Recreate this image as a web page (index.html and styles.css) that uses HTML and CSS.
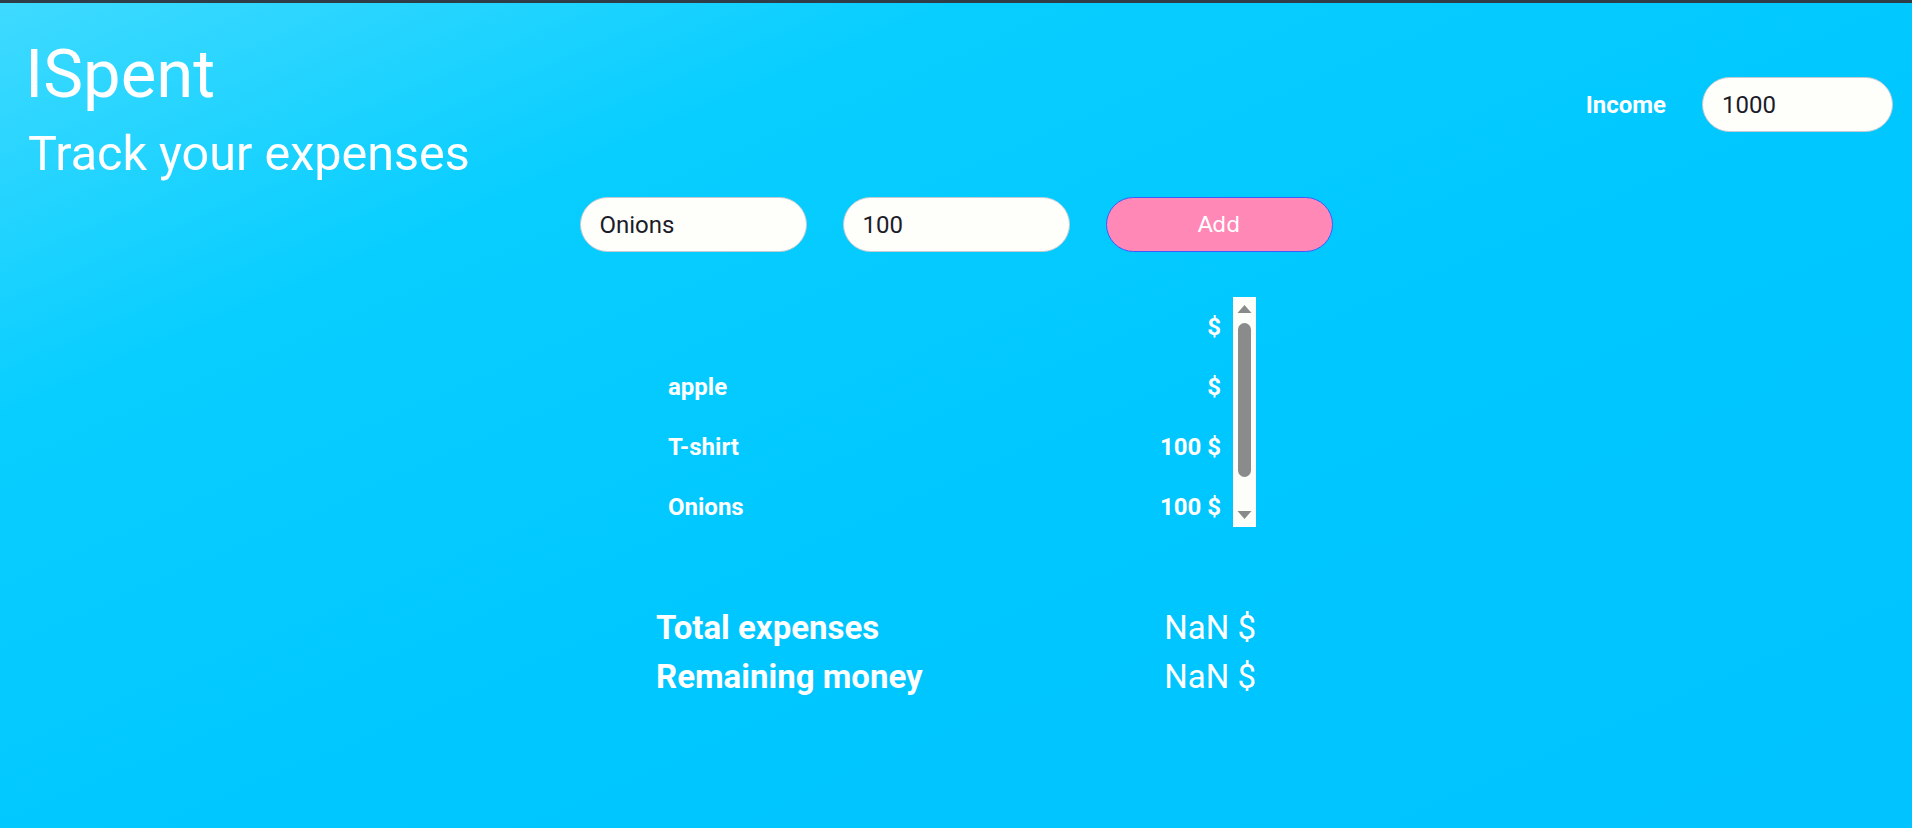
FILE: index.html
```html
<!DOCTYPE html>
<html lang="en">
<head>
<meta charset="utf-8">
<title>ISpent</title>
<link rel="stylesheet" href="styles.css">
</head>
<body>
<header class="top">
  <div class="titles">
    <h1 class="brand">ISpent</h1>
    <h2 class="tagline">Track your expenses</h2>
  </div>
  <div class="income">
    <label class="income-label" for="income">Income</label>
    <input id="income" class="field" type="text" value="1000">
  </div>
</header>
<main class="content">
  <form class="add-form">
    <input class="field" type="text" value="Onions">
    <input class="field" type="text" value="100">
    <button type="button" class="add-btn">Add</button>
  </form>
  <div class="list-box">
    <ul class="list">
      <li class="row"><span class="name"></span><span class="amount"> $</span></li>
      <li class="row"><span class="name">apple</span><span class="amount"> $</span></li>
      <li class="row"><span class="name">T-shirt</span><span class="amount">100 $</span></li>
      <li class="row"><span class="name">Onions</span><span class="amount">100 $</span></li>
    </ul>
    <div class="scrollbar">
      <svg class="arrow" width="23" height="8" viewBox="0 0 23 8"><polygon points="4.5,8 18.5,8 11.5,0" fill="#8a8a8a"/></svg>
      <div class="track"><div class="thumb"></div></div>
      <svg class="arrow" width="23" height="8" viewBox="0 0 23 8"><polygon points="4.5,0 18.5,0 11.5,8" fill="#8a8a8a"/></svg>
    </div>
  </div>
  <div class="totals">
    <div class="total-row"><span class="total-label">Total expenses</span><span class="total-value">NaN $</span></div>
    <div class="total-row"><span class="total-label">Remaining money</span><span class="total-value">NaN $</span></div>
  </div>
</main>
</body>
</html>
```
FILE: styles.css
```css
html, body {
  height: 100%;
}
body {
  margin: 0;
  border-top: 3px solid #2f3d48;
  box-sizing: border-box;
  background: linear-gradient(to bottom right, #3fdaff 0%, #08ceff 25%, #00c7ff 55%, #00c3ff 100%);
  font-family: Roboto, "Liberation Sans", sans-serif;
  color: #ffffff;
  min-height: 828px;
}
.top {
  display: flex;
  justify-content: space-between;
  align-items: flex-start;
  padding: 31px 19px 0 22px;
}
.brand {
  margin: 0 0 0 3px;
  font-size: 67px;
  font-weight: 400;
  line-height: 80px;
}
.tagline {
  margin: 12px 0 0 6px;
  font-size: 48.5px;
  font-weight: 400;
  line-height: 56px;
}
.income {
  display: flex;
  align-items: center;
  gap: 36px;
  margin-top: 43px;
}
.income-label {
  font-size: 24px;
  font-weight: 700;
}
.field {
  box-sizing: border-box;
  height: 55px;
  border: 1px solid #c3ccd2;
  border-radius: 28px;
  background: #fefefb;
  padding: 0 19px;
  font-family: Roboto, "Liberation Sans", sans-serif;
  font-size: 24px;
  color: #1c1c28;
  outline: none;
}
.income .field {
  width: 191px;
}
.content {
  display: flex;
  flex-direction: column;
  align-items: center;
}
.add-form {
  display: flex;
  gap: 36px;
  margin-top: 15px;
}
.add-form .field {
  width: 227px;
}
.add-btn {
  box-sizing: border-box;
  width: 227px;
  height: 55px;
  border: 1px solid #3d5cff;
  border-radius: 28px;
  background: #ff88b6;
  color: #ffffff;
  font-family: "DejaVu Sans", sans-serif;
  font-size: 22px;
  padding: 0;
}
.list-box {
  display: flex;
  width: 600px;
  height: 230px;
  margin-top: 45px;
}
.list {
  flex: 1;
  list-style: none;
  margin: 0;
  padding: 0 12px;
  overflow: hidden;
}
.row {
  display: flex;
  justify-content: space-between;
  align-items: center;
  height: 60px;
  font-size: 24px;
  font-weight: 700;
}
.scrollbar {
  width: 23px;
  background: #fdfdf9;
  display: flex;
  flex-direction: column;
  padding: 8px 0;
  box-sizing: border-box;
}
.arrow {
  display: block;
  flex: none;
}
.track {
  flex: 1;
  display: flex;
  flex-direction: column;
  padding: 10px 0 34px;
}
.thumb {
  width: 13px;
  height: 154px;
  margin-left: 5px;
  border-radius: 7px;
  background: #8b8b8b;
}
.totals {
  width: 600px;
  margin-top: 76px;
}
.total-row {
  display: flex;
  justify-content: space-between;
  font-size: 33px;
  line-height: 49px;
}
.total-label {
  font-weight: 700;
}
.total-value {
  font-weight: 400;
}
```
